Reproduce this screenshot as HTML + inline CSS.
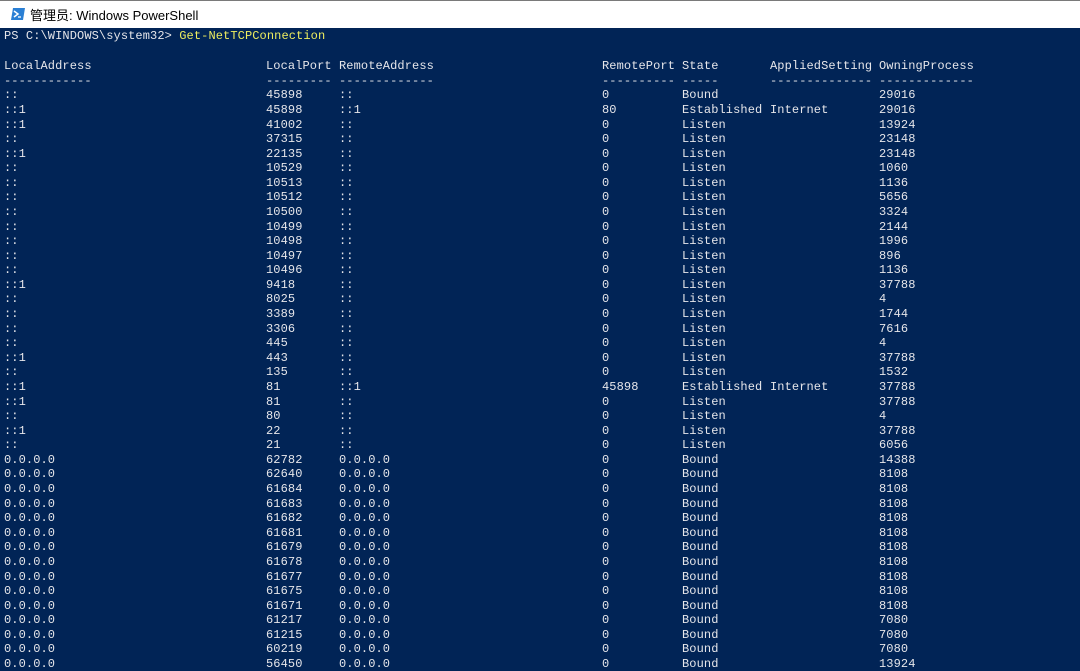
<!DOCTYPE html>
<html><head><meta charset="utf-8"><style>
body{margin:0;width:1080px;height:671px;overflow:hidden;background:#012456;font-family:"Liberation Mono",monospace;}
.tb{position:absolute;left:0;top:0;width:1080px;height:28px;background:#fff;border-top:1px solid #7a7a7a;box-sizing:border-box;}
.tt{position:absolute;left:30px;top:4px;font:13px "Liberation Sans","Noto Sans CJK SC",sans-serif;color:#000;}
.con{position:absolute;left:0;top:28px;width:1080px;height:643px;background:#012456;color:#e6e6ea;font-size:12px;letter-spacing:0.1px;}
.r{position:absolute;left:0;height:14.6px;line-height:14.6px;white-space:pre;width:1080px}
.r i{font-style:normal;position:absolute;top:0}
.a{left:4px}.b{left:266px}.c{left:339px}.d{left:602px}.e{left:682px}.f{left:770px}.g{left:879px}
</style></head><body>
<div class="tb">
<svg style="position:absolute;left:11px;top:7px" width="14" height="12" viewBox="0 0 14 12"><path d="M2 0H14L12 12H0Z" fill="#2a7fd4"/><path d="M3 3L7 6L3 9" stroke="#fff" stroke-width="1.5" fill="none"/><path d="M7 9H10" stroke="#fff" stroke-width="1.3"/></svg>
<div class="tt">管理员: Windows PowerShell</div>
</div>
<div class="con" id="c">
<div class="r" style="top:1px"><i class="a">PS C:\WINDOWS\system32&gt; <span style="color:#eeed5f">Get-NetTCPConnection</span></i></div>
</div>
<script>
var c=document.getElementById('c');
var rows=[["LocalAddress","LocalPort","RemoteAddress","RemotePort","State","AppliedSetting","OwningProcess"],
["------------","---------","-------------","----------","-----","--------------","-------------"]];
var L=[["::",45898,"::",0,"Bound","",29016],["::1",45898,"::1",80,"Established","Internet",29016],
["::1",41002,"::",0,"Listen","",13924],["::",37315,"::",0,"Listen","",23148],["::1",22135,"::",0,"Listen","",23148]];
[["::",10529,1060],["::",10513,1136],["::",10512,5656],["::",10500,3324],["::",10499,2144],["::",10498,1996],["::",10497,896],["::",10496,1136],["::1",9418,37788],["::",8025,4],["::",3389,1744],["::",3306,7616],["::",445,4],["::1",443,37788],["::",135,1532]].forEach(function(x){L.push([x[0],x[1],"::",0,"Listen","",x[2]])});
L.push(["::1",81,"::1",45898,"Established","Internet",37788]);
[["::1",81,37788],["::",80,4],["::1",22,37788],["::",21,6056]].forEach(function(x){L.push([x[0],x[1],"::",0,"Listen","",x[2]])});
[[62782,14388],[62640,8108],[61684,8108],[61683,8108],[61682,8108],[61681,8108],[61679,8108],[61678,8108],[61677,8108],[61675,8108],[61671,8108],[61217,7080],[61215,7080],[60219,7080],[56450,13924]].forEach(function(x){L.push(["0.0.0.0",x[0],"0.0.0.0",0,"Bound","",x[1]])});
rows=rows.concat(L);
var cl="abcdefg",h="";
rows.forEach(function(r,i){var t=2+(i+2)*14.58;h+='<div class="r" style="top:'+t.toFixed(1)+'px">';r.forEach(function(v,j){h+='<i class="'+cl[j]+'">'+v+'</i>'});h+='</div>'});
c.insertAdjacentHTML('beforeend',h);
</script>
</body></html>
